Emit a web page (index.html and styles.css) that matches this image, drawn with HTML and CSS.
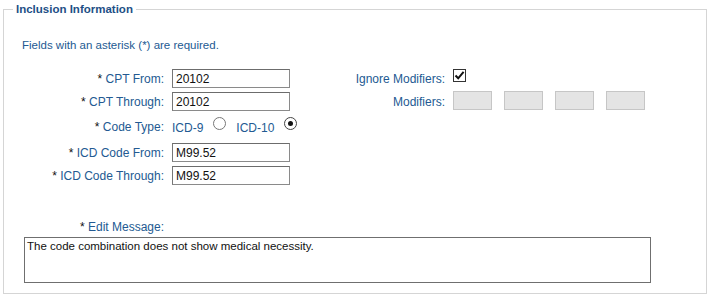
FILE: index.html
```html
<!DOCTYPE html>
<html lang="en">
<head>
<meta charset="utf-8">
<title>Inclusion Information</title>
<link rel="stylesheet" href="styles.css">
</head>
<body>
<fieldset class="panel">
  <legend class="panel-title">Inclusion Information</legend>
  <p class="note">Fields with an asterisk (*) are required.</p>
  <div class="form-cols">
    <div class="form-grid left-grid">
      <label class="lbl"><span class="req">*</span> CPT From:</label>
      <div class="fld"><input class="txt" type="text" value="20102"></div>

      <label class="lbl"><span class="req">*</span> CPT Through:</label>
      <div class="fld"><input class="txt" type="text" value="20102"></div>

      <label class="lbl"><span class="req">*</span> Code Type:</label>
      <div class="fld radios">
        <span class="opt">ICD-9</span><input class="radio" type="radio" name="ct">
        <span class="opt">ICD-10</span><input class="radio" type="radio" name="ct" checked>
      </div>

      <label class="lbl"><span class="req">*</span> ICD Code From:</label>
      <div class="fld"><input class="txt" type="text" value="M99.52"></div>

      <label class="lbl"><span class="req">*</span> ICD Code Through:</label>
      <div class="fld"><input class="txt" type="text" value="M99.52"></div>
    </div>

    <div class="form-grid right-grid">
      <label class="lbl">Ignore Modifiers:</label>
      <div class="fld top1">
        <span class="check"><svg width="11" height="11" viewBox="0 0 11 11"><path d="M1.5 5.5 L4.2 8.3 L9.6 1.8" fill="none" stroke="#111" stroke-width="2"/></svg></span>
      </div>

      <label class="lbl">Modifiers:</label>
      <div class="fld mods top0">
        <input class="mod" type="text" disabled>
        <input class="mod" type="text" disabled>
        <input class="mod" type="text" disabled>
        <input class="mod" type="text" disabled>
      </div>
    </div>
  </div>

  <div class="msg-label"><span class="req">*</span> Edit Message:</div>
  <textarea class="msg">The code combination does not show medical necessity.</textarea>
</fieldset>
</body>
</html>
```

FILE: styles.css
```css
html, body {
  margin: 0;
  padding: 0;
  background: #ffffff;
}

body {
  font-family: "Liberation Sans", Arial, sans-serif;
  font-size: 12px;
  color: #235a92;
}

.panel {
  margin: 0 2px 0 3px;
  padding: 0 0 10px 0;
  border: 1px solid #d5d5d5;
  min-width: 0;
}

.panel-title {
  margin-left: 9px;
  padding: 0 3px;
  font-weight: bold;
  font-size: 11.5px;
  line-height: 19px;
  color: #1e4f86;
}

.note {
  margin: 18px 0 0 18px;
  font-size: 11.5px;
  line-height: 16px;
}

.form-cols {
  display: flex;
  margin-top: 14px;
}

.form-grid {
  display: grid;
  column-gap: 8px;
  align-items: center;
}

.left-grid {
  grid-template-columns: 160px 125px;
  grid-template-rows: 23px 23px 28px 23px 23px;
}

.right-grid {
  grid-template-columns: 148px auto;
  grid-template-rows: 23px 23px;
  align-self: flex-start;
}

.lbl {
  text-align: right;
  line-height: 16px;
  white-space: nowrap;
}

.req {
  color: #111;
}

.fld {
  display: flex;
  align-items: center;
  white-space: nowrap;
}

.txt {
  box-sizing: border-box;
  width: 118px;
  height: 19px;
  margin: 0;
  padding: 0 3px;
  border: 1px solid #8a8a8a;
  border-top-color: #6c6c6c;
  border-left-color: #767676;
  font-family: "Liberation Sans", Arial, sans-serif;
  font-size: 12px;
  color: #111;
  background: #fff;
  outline: none;
}

.radios {
  align-self: stretch;
}

.opt {
  flex: none;
  white-space: nowrap;
  line-height: 16px;
  margin-top: 1px;
}

.radio {
  appearance: none;
  -webkit-appearance: none;
  flex: none;
  box-sizing: border-box;
  width: 13px;
  height: 13px;
  margin: 0 10px 8px 10px;
  border: 1px solid #777;
  border-radius: 50%;
  background: #fff;
  position: relative;
}

.radio:checked {
  border-color: #444;
}

.radio:checked::after {
  content: "";
  position: absolute;
  left: 3px;
  top: 3px;
  width: 5px;
  height: 5px;
  border-radius: 50%;
  background: #111;
}

.top1 {
  align-self: start;
  margin-top: 2px;
}

.top0 {
  align-self: start;
  margin-top: 1px;
}

.check {
  box-sizing: border-box;
  width: 13px;
  height: 13px;
  border: 1px solid #333;
  background: #fff;
  display: flex;
  align-items: center;
  justify-content: center;
}

.check svg {
  display: block;
}

.mods {
  gap: 12px;
}

.mod {
  box-sizing: border-box;
  width: 39px;
  height: 19px;
  margin: 0;
  border: 1px solid #c6c6c6;
  background: #e4e4e4;
}

.msg-label {
  width: 160px;
  text-align: right;
  margin-top: 32px;
  line-height: 16px;
}

.msg {
  display: block;
  box-sizing: border-box;
  width: 627px;
  height: 46px;
  margin: 2px 0 0 20px;
  padding: 1px 2px;
  border: 1px solid #6f6f6f;
  font-family: "Liberation Sans", Arial, sans-serif;
  font-size: 11.5px;
  line-height: 14px;
  color: #111;
  resize: none;
  outline: none;
}
```
